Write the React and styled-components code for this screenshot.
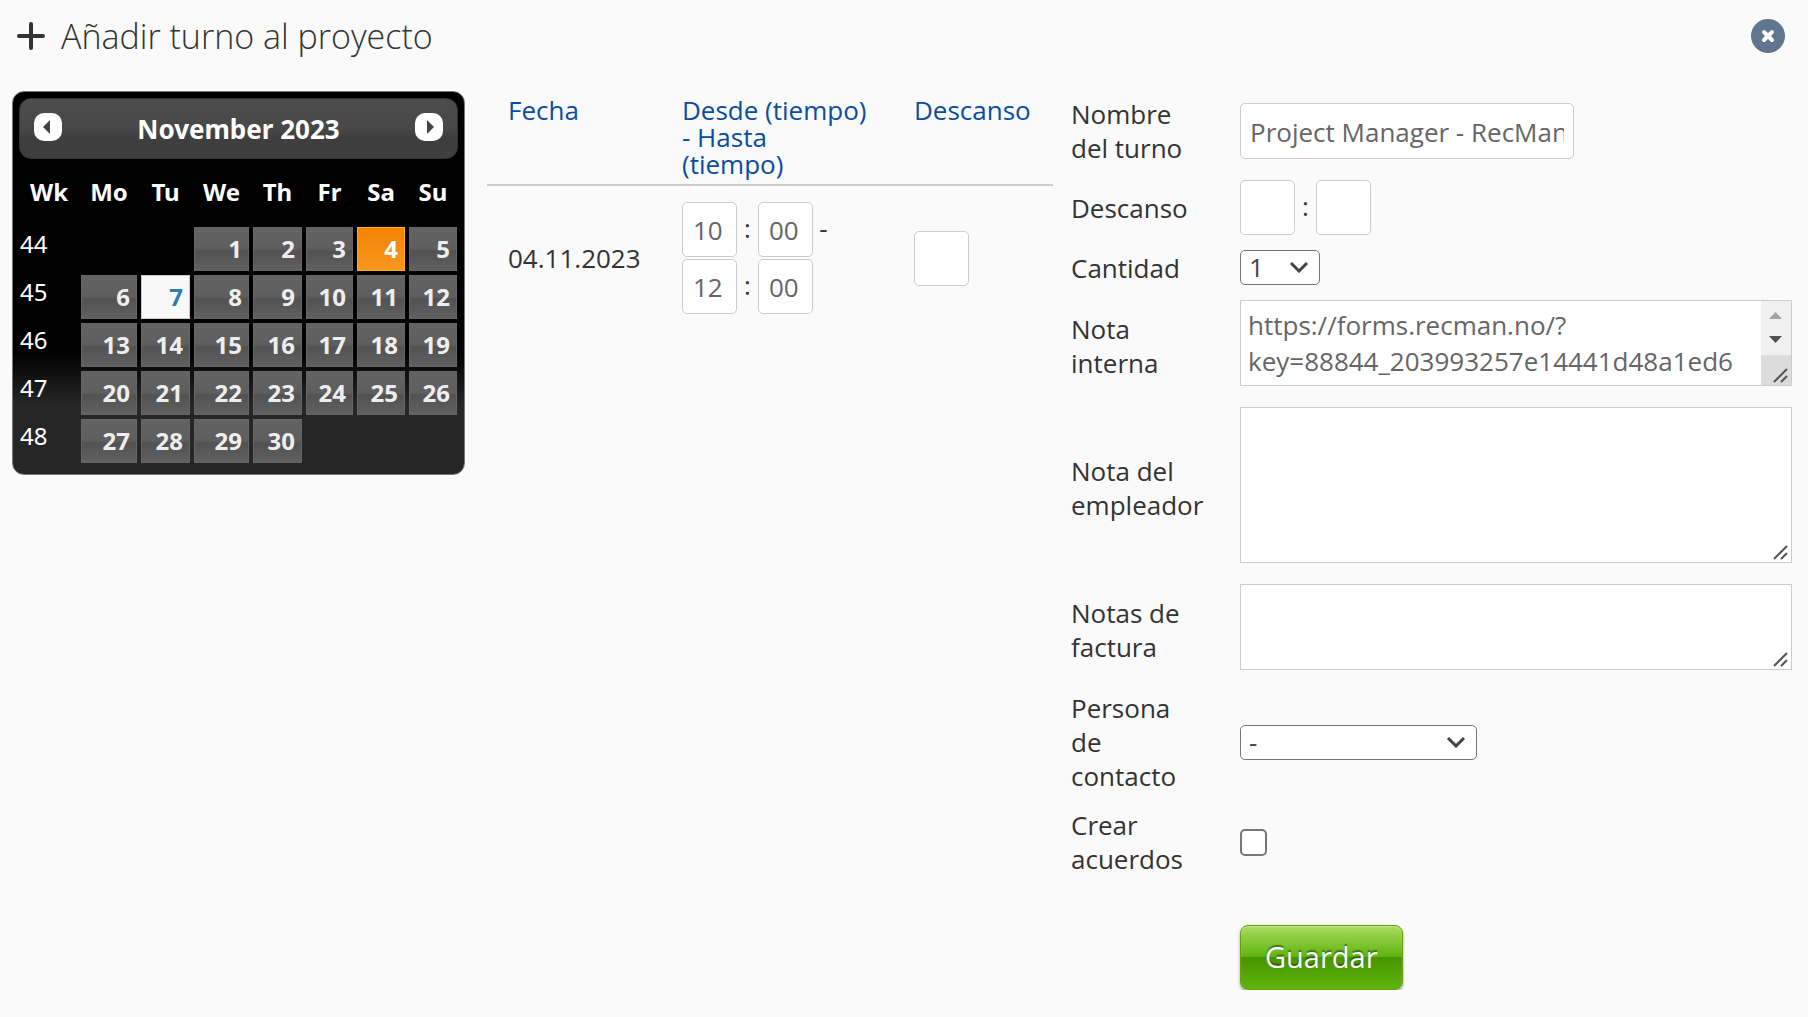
import React from 'react'
import styled, { createGlobalStyle } from 'styled-components'

const weekDays = ['Wk', 'Mo', 'Tu', 'We', 'Th', 'Fr', 'Sa', 'Su']
const columnWidths = [60, 60, 53, 59, 53, 51, 52, 52]

const weeks = [
  { number: 44, days: [null, null, 1, 2, 3, 4, 5] },
  { number: 45, days: [6, 7, 8, 9, 10, 11, 12] },
  { number: 46, days: [13, 14, 15, 16, 17, 18, 19] },
  { number: 47, days: [20, 21, 22, 23, 24, 25, 26] },
  { number: 48, days: [27, 28, 29, 30, null, null, null] },
]

const Grip = () => (
  <GripIcon viewBox="0 0 16 16" aria-hidden="true">
    <path d="M1 15L14 2M8 15L14 9" />
  </GripIcon>
)

const Calendar = () => (
  <CalendarBox>
    <CalendarHeader>
      <ArrowButton type="button" aria-label="Prev">
        <svg viewBox="0 0 28 28"><rect width="28" height="28" rx="10" fill="#fff" /><path d="M16 7V21L9 14Z" fill="#444" /></svg>
      </ArrowButton>
      <MonthName>November 2023</MonthName>
      <ArrowButton type="button" aria-label="Next">
        <svg viewBox="0 0 28 28"><rect width="28" height="28" rx="10" fill="#fff" /><path d="M12 7V21L19 14Z" fill="#444" /></svg>
      </ArrowButton>
    </CalendarHeader>
    <DaysTable>
      <colgroup>
        {columnWidths.map((width, i) => <Column key={i} $width={width} />)}
      </colgroup>
      <thead>
        <tr>
          {weekDays.map((day) => <WeekDay key={day} scope="col">{day}</WeekDay>)}
        </tr>
      </thead>
      <tbody>
        {weeks.map((week) => (
          <tr key={week.number}>
            <WeekNumber>{week.number}</WeekNumber>
            {week.days.map((day, i) => (
              <DayCell key={i}>
                {day && <Day href="#" $selected={day === 4} $today={day === 7}>{day}</Day>}
              </DayCell>
            ))}
          </tr>
        ))}
      </tbody>
    </DaysTable>
  </CalendarBox>
)

const Shifts = () => (
  <ShiftTable>
    <thead>
      <tr>
        <ShiftHead scope="col" $width="174px">Fecha</ShiftHead>
        <ShiftHead scope="col" $width="232px">Desde (tiempo)<br />- Hasta<br />(tiempo)</ShiftHead>
        <ShiftHead scope="col">Descanso</ShiftHead>
      </tr>
    </thead>
    <tbody>
      <tr>
        <ShiftCell>04.11.2023</ShiftCell>
        <ShiftCell>
          <Times>
            <TimeLine>
              <SmallInput aria-label="Desde, hora" defaultValue="10" />
              <Separator>:</Separator>
              <SmallInput aria-label="Desde, minutos" defaultValue="00" />
              <Separator>-</Separator>
            </TimeLine>
            <TimeLine>
              <SmallInput aria-label="Hasta, hora" defaultValue="12" />
              <Separator>:</Separator>
              <SmallInput aria-label="Hasta, minutos" defaultValue="00" />
            </TimeLine>
          </Times>
        </ShiftCell>
        <ShiftCell>
          <SmallInput aria-label="Descanso" />
        </ShiftCell>
      </tr>
    </tbody>
  </ShiftTable>
)

const App = () => {
  return (
    <Page>
      <GlobalStyle />
      <TopBar>
        <PlusIcon viewBox="0 0 28 28" aria-hidden="true"><path d="M14 2V26M2 14H26" /></PlusIcon>
        <Title>Añadir turno al proyecto</Title>
        <CloseButton type="button" aria-label="Cerrar">
          <svg viewBox="0 0 34 34"><path d="M13 13L21 21M21 13L13 21" /></svg>
        </CloseButton>
      </TopBar>
      <Content>
        <Calendar />
        <Shifts />
        <Form onSubmit={(e) => e.preventDefault()}>
          <Row>
            <Label htmlFor="name">Nombre<br />del turno</Label>
            <NameInput id="name" defaultValue="Project Manager - RecMan" />
          </Row>
          <Row>
            <Label htmlFor="pause">Descanso</Label>
            <TimeLine>
              <SmallInput id="pause" />
              <Separator>:</Separator>
              <SmallInput aria-label="Descanso, minutos" />
            </TimeLine>
          </Row>
          <Row>
            <Label htmlFor="amount">Cantidad</Label>
            <SelectBox $width="80px">
              <Select id="amount"><option>1</option></Select>
              <Chevron viewBox="0 0 20 12" aria-hidden="true"><path d="M2 2L10 10L18 2" /></Chevron>
            </SelectBox>
          </Row>
          <Row>
            <Label htmlFor="internal">Nota<br />interna</Label>
            <NoteBox>
              <Note id="internal" $height="86px" $scroll defaultValue={'https://forms.recman.no/?\nkey=88844_203993257e14441d48a1ed6'} />
              <ScrollBar viewBox="0 0 30 84" aria-hidden="true">
                <rect width="30" height="84" fill="#f0f0f0" />
                <rect y="54" width="30" height="30" fill="#dcdcdc" />
                <path d="M8 18L14.500 11L21 18Z" fill="#a3a3a3" />
                <path d="M8 35L14.500 42L21 35Z" fill="#505050" />
              </ScrollBar>
              <Grip />
            </NoteBox>
          </Row>
          <Row>
            <Label htmlFor="employer">Nota del<br />empleador</Label>
            <NoteBox>
              <Note id="employer" $height="156px" />
              <Grip />
            </NoteBox>
          </Row>
          <Row>
            <Label htmlFor="invoice">Notas de<br />factura</Label>
            <NoteBox>
              <Note id="invoice" $height="86px" />
              <Grip />
            </NoteBox>
          </Row>
          <Row>
            <Label htmlFor="contact">Persona<br />de<br />contacto</Label>
            <SelectBox $width="237px">
              <Select id="contact"><option>-</option></Select>
              <Chevron viewBox="0 0 20 12" aria-hidden="true"><path d="M2 2L10 10L18 2" /></Chevron>
            </SelectBox>
          </Row>
          <Row>
            <Label htmlFor="agreements">Crear<br />acuerdos</Label>
            <CheckBox id="agreements" type="checkbox" />
          </Row>
          <SaveButton type="submit">Guardar</SaveButton>
        </Form>
      </Content>
    </Page>
  )
}

export default App

const GlobalStyle = createGlobalStyle`
*{
  box-sizing:border-box
}
body{
  margin:0;
  background:#fafafa;
  color:#333;
  font-family:"Open Sans", "Noto Sans", sans-serif;
  font-size:26px
}
input, select, textarea, button{
  font-family:inherit;
  font-size:26px;
  margin:0
}
`

const Page = styled.div`
padding:0 16px 0 12px
`

const TopBar = styled.header`
display:flex;
align-items:center;
height:71px;
padding:0 7px 0 5px
`

const PlusIcon = styled.svg`
width:28px;
height:28px;
margin-right:16px;
fill:none;
stroke:#333;
stroke-width:4;
stroke-linecap:round
`

const Title = styled.h1`
flex:1;
margin:0;
font-size:34px;
font-weight:300;
line-height:44px
`

const CloseButton = styled.button`
width:34px;
height:34px;
padding:0;
border:0;
border-radius:50%;
background:#60768f;
svg{
  display:block;
  fill:none;
  stroke:#fff;
  stroke-width:4;
  stroke-linecap:round
}
`

const Content = styled.main`
display:flex;
align-items:flex-start
`

const CalendarBox = styled.section`
flex:none;
width:453px;
height:384px;
margin-top:20px;
padding:6px;
border:1px solid #777;
border-radius:12px;
background:linear-gradient(#000 0%, #000 68%, #262626 82%, #262626 100%);
color:#fff;
font-family:"Noto Sans", "Open Sans", sans-serif
`

const CalendarHeader = styled.div`
display:flex;
align-items:center;
justify-content:space-between;
height:61px;
padding:0 14px 4px;
border:1px solid #333;
border-radius:12px;
background:linear-gradient(#4c4c4c 0%, #484848 50%, #3e3e3e 65%, #3f3f3f 100%)
`

const ArrowButton = styled.button`
width:28px;
height:28px;
padding:0;
border:0;
background:none;
svg{
  display:block
}
`

const MonthName = styled.div`
padding-top:4px;
font-size:26px;
font-weight:bold;
line-height:34px
`

const DaysTable = styled.table`
width:100%;
table-layout:fixed;
border-collapse:collapse;
font-size:24px;
line-height:32px
`

const Column = styled.col`
width:${({ $width }) => $width}px
`

const WeekDay = styled.th`
height:66px;
padding:0;
text-align:center
`

const WeekNumber = styled.td`
padding:0 0 10px 1px
`

const DayCell = styled.td`
height:48px;
padding:2px
`

const Day = styled.a`
display:block;
height:44px;
padding:5px 6px 0 0;
border:1px solid ${({ $selected, $today }) => ($selected ? '#ffaf0f' : $today ? '#ccc' : '#666')};
background:${({ $selected, $today }) => ($selected ? 'linear-gradient(#f58400, #f8961f)' : $today ? '#f8f8f8' : 'linear-gradient(#636363 0%, #5e5e5e 50%, #525252 55%, #606060 100%)')};
color:${({ $selected, $today }) => ($selected ? '#fff' : $today ? '#2e7db2' : '#eee')};
font-weight:bold;
text-align:right;
text-decoration:none
`

const ShiftTable = styled.table`
flex:1;
margin:23px 18px 0 22px;
border-collapse:collapse
`

const ShiftHead = styled.th`
width:${({ $width }) => $width || 'auto'};
padding:3px 0 6px 21px;
border-bottom:2px solid #ccc;
color:#0a4da2;
font-weight:normal;
line-height:27px;
text-align:left;
vertical-align:top;
white-space:nowrap
`

const ShiftCell = styled.td`
padding:16px 0 0 21px
`

const Times = styled.div`
display:flex;
flex-direction:column;
gap:2px
`

const TimeLine = styled.div`
display:flex;
align-items:center
`

const Separator = styled.span`
width:21px;
padding-bottom:4px;
text-align:center
`

const SmallInput = styled.input`
width:55px;
height:55px;
padding:0 0 0 10px;
border:1px solid #ccc;
border-radius:5px;
background:#fff;
color:#666
`

const Form = styled.form`
display:flex;
flex-direction:column;
gap:15px;
width:721px;
padding-top:26px
`

const Row = styled.div`
display:flex;
align-items:center
`

const Label = styled.label`
flex:none;
width:169px;
line-height:34px
`

const NameInput = styled.input`
width:334px;
height:56px;
padding:2px 9px 0;
border:1px solid #ccc;
border-radius:5px;
background:#fff;
color:#666
`

const SelectBox = styled.div`
position:relative;
width:${({ $width }) => $width}
`

const Select = styled.select`
display:block;
width:100%;
height:35px;
padding:0 8px;
border:1px solid #767676;
border-radius:5px;
background:#fff;
color:#444;
line-height:33px;
appearance:none
`

const Chevron = styled.svg`
position:absolute;
right:11px;
top:11px;
width:20px;
height:12px;
fill:none;
stroke:#444;
stroke-width:3;
pointer-events:none
`

const NoteBox = styled.div`
position:relative;
flex:1;
margin-bottom:6px
`

const Note = styled.textarea`
display:block;
width:100%;
height:${({ $height }) => $height};
padding:6px ${({ $scroll }) => ($scroll ? '40px' : '8px')} 0 7px;
border:1px solid #ccc;
background:#fff;
color:#666;
line-height:36px;
overflow:hidden;
resize:none
`

const ScrollBar = styled.svg`
position:absolute;
right:1px;
top:1px;
width:30px;
height:84px
`

const GripIcon = styled.svg`
position:absolute;
right:3px;
bottom:3px;
width:16px;
height:16px;
fill:none;
stroke:#555;
stroke-width:2
`

const CheckBox = styled.input`
width:27px;
height:27px;
border:2px solid #767676;
border-radius:5px;
background:#fff;
appearance:none
`

const SaveButton = styled.button`
align-self:flex-start;
height:65px;
margin:34px 0 0 169px;
padding:0 24px 2px;
border:1px solid #6b9a10;
border-radius:8px;
background:linear-gradient(#a9dc5f 0%, #5fb40f 49%, #479400 50%, #5fb60c 100%);
box-shadow:0 2px 3px rgba(0, 0, 0, 0.35), inset 0 1px 1px #c8ea90;
color:#fff;
font-size:29px;
text-shadow:0 -2px 1px rgba(0, 0, 0, 0.4)
`
